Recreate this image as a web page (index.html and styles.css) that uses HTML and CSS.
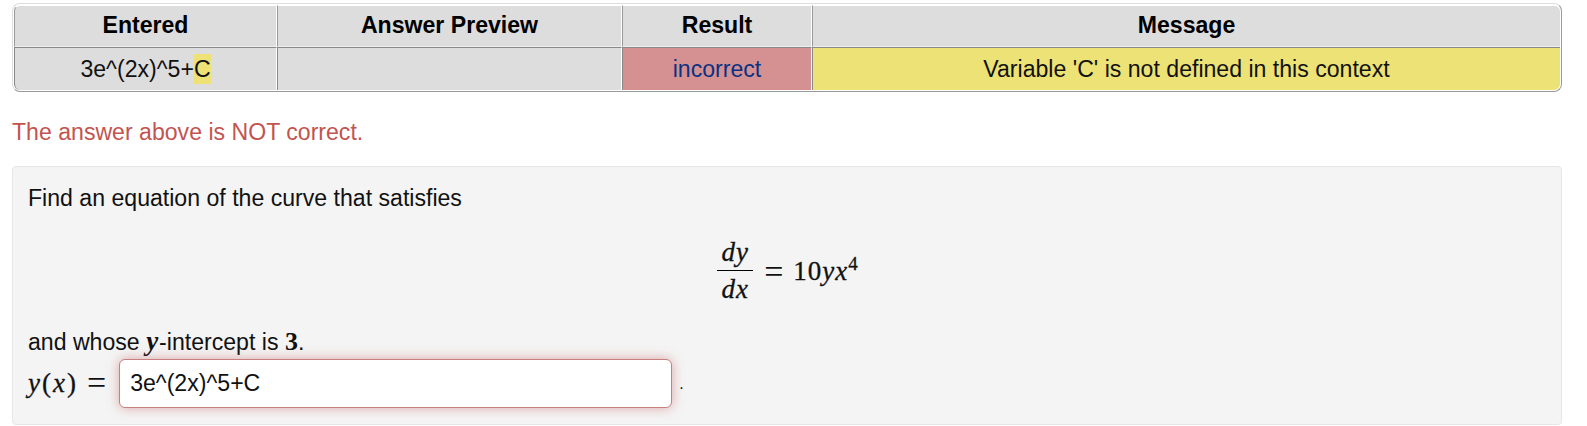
FILE: index.html
```html
<!DOCTYPE html>
<html lang="en">
<head>
    <meta charset="UTF-8">
    <meta name="viewport" content="width=device-width, initial-scale=1.0">
    <title>Problem</title>
    <link rel="stylesheet" href="styles.css">
</head>
<body>
    <div class="results-wrap">
        <table class="results">
            <thead>
                <tr>
                    <th class="col-entered">Entered</th>
                    <th class="col-preview">Answer Preview</th>
                    <th class="col-result">Result</th>
                    <th>Message</th>
                </tr>
            </thead>
            <tbody>
                <tr>
                    <td>3e^(2x)^5+<span class="parser-error">C</span></td>
                    <td></td>
                    <td class="incorrect">incorrect</td>
                    <td class="message">Variable 'C' is not defined in this context</td>
                </tr>
            </tbody>
        </table>
    </div>

    <p class="feedback">The answer above is NOT correct.</p>

    <div class="problem">
        <p class="intro">Find an equation of the curve that satisfies</p>
        <div class="display-math">
            <span class="frac">
                <span class="num math">dy</span>
                <span class="den math">dx</span>
            </span>
            <span class="eq-rhs math"><span class="rel">=</span><span class="up">10</span>yx<sup class="up">4</sup></span>
        </div>
        <p class="outro">and whose <span class="math bold-var">y</span>-intercept is <span class="up-bold">3</span>.</p>
        <div class="answer-row">
            <span class="math answer-label">y<span class="up">(</span>x<span class="up">)</span><span class="rel label-eq">=</span></span>
            <input class="answer-input" type="text" value="3e^(2x)^5+C">
            <span class="period">.</span>
        </div>
    </div>
</body>
</html>
```

FILE: styles.css
```css
body {
    font-family: "Liberation Sans", Arial, sans-serif;
    font-size: 23.1px;
    color: #111;
    background-color: #fff;
    margin: 0;
    padding: 3px 25px 0 12px;
}
.results-wrap {
    border: 1px solid #ddd;
    border-right-color: #999;
    border-bottom-color: #999;
    border-radius: 8px;
    padding: 1px;
}
.results {
    width: 100%;
    border-collapse: separate;
    border-spacing: 0;
    table-layout: fixed;
}
.results th,
.results td {
    background-color: #ddd;
    text-align: center;
    padding: 0;
    border-left: 1px solid #888;
    border-right: 1px solid #fff;
}
.results th {
    height: 39px;
    padding-bottom: 1px;
    font-weight: bold;
    color: #000;
    border-top: 1px solid #fff;
    border-left-color: #999;
    border-bottom: 1px solid #eee;
}
.results td {
    height: 42px;
    border-top: 1px solid #888;
}
.results th:first-child {
    border-top-left-radius: 6px;
}
.results th:last-child {
    border-top-right-radius: 6px;
    border-right: 0;
}
.results td:first-child {
    border-bottom-left-radius: 6px;
}
.results td:last-child {
    border-bottom-right-radius: 6px;
    border-right: 0;
}
.col-entered {
    width: 261px;
}
.col-preview {
    width: 343px;
}
.col-result {
    width: 188px;
}
.parser-error {
    background-color: #eee276;
    padding: 2px 0;
}
.results .incorrect {
    background-color: #d59191;
    color: #0a3184;
}
.results .message {
    background-color: #ede275;
}
.feedback {
    color: #c25450;
    margin: 24px 0 18px;
    line-height: 32px;
}
.problem {
    background-color: #f4f4f4;
    border: 1px solid #e6e6e6;
    border-radius: 4px;
    padding: 15px 16px 16px 15px;
}
.problem p {
    margin: 0;
}
.intro {
    line-height: 32px;
}
.display-math {
    display: flex;
    justify-content: center;
    align-items: center;
    height: 96px;
    margin: 9px 0 6px;
}
.math {
    font-family: "Liberation Serif", "Times New Roman", serif;
    font-style: italic;
    letter-spacing: 1px;
    -webkit-text-stroke: 0.3px;
}
.up {
    font-style: normal;
}
.frac {
    display: inline-flex;
    flex-direction: column;
    align-items: center;
    font-size: 27px;
    margin-left: 3px;
    margin-right: 11px;
}
.num {
    border-bottom: 1px solid #000;
    width: 36px;
    text-align: center;
    line-height: 35px;
}
.den {
    line-height: 36px;
}
.eq-rhs {
    font-size: 27px;
}
.rel {
    font-size: 34px;
    line-height: 0;
    font-style: normal;
    margin-right: 10px;
    letter-spacing: 0;
    vertical-align: -3px;
    -webkit-text-stroke: 0;
}
.eq-rhs sup {
    font-size: 19px;
    line-height: 0;
}
.outro {
    line-height: 32px;
}
.bold-var {
    font-size: 27px;
    font-weight: bold;
    -webkit-text-stroke: 0;
}
.up-bold {
    font-family: "Liberation Serif", serif;
    font-size: 26px;
    font-weight: bold;
}
.answer-row {
    display: flex;
    align-items: center;
    margin-top: 1px;
}
.answer-label {
    font-size: 27px;
    letter-spacing: 2px;
    margin-right: 13px;
    white-space: nowrap;
}
.label-eq {
    margin: 0 0 0 9px;
    vertical-align: -2px;
}
.answer-input {
    width: 553px;
    height: 49px;
    box-sizing: border-box;
    padding: 0 10px;
    font: inherit;
    color: #111;
    background-color: #fff;
    border: 1px solid #c87f7f;
    border-radius: 6px;
    box-shadow: 0 0 12px rgba(200, 100, 100, 0.55);
}
.period {
    font-size: 16px;
    margin-left: 7px;
}
```
